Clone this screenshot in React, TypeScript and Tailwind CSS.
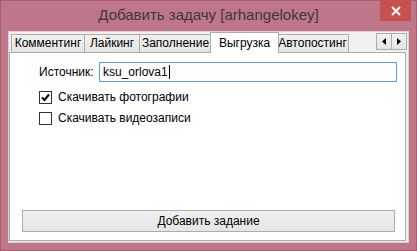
import React from "react";

const font = { fontFamily: '"Liberation Sans", Arial, sans-serif' };

function Tab({ label, w, selected }: { label: string; w: number; selected?: boolean }) {
  if (selected) {
    return (
      <div
        className="relative z-10 -mx-[2px] h-[21px] -mb-[1px] flex items-start justify-center border border-b-0 border-[#acacac] bg-white pt-[3px] text-[12px] leading-[14px] text-black"
        style={{ width: w + 4 }}
      >
        {label}
      </div>
    );
  }
  return (
    <div
      className="mt-[2px] h-[18px] -ml-[1px] first:ml-0 flex items-start justify-center border border-b-0 border-[#acacac] bg-gradient-to-b from-[#f0f0f0] to-[#e5e5e5] pt-[1px] text-[12px] leading-[14px] text-black"
      style={{ width: w }}
    >
      {label}
    </div>
  );
}

export default function App() {
  return (
    <div
      className="flex h-[251px] w-[417px] flex-col border border-[#a55d71] bg-[#bf7689]"
      style={font}
    >
      {/* Title bar */}
      <div className="relative flex h-[30px] shrink-0 items-center justify-center">
        <span className="pb-[2px] text-[15px] text-[#3a3a3a]">Добавить задачу [arhangelokey]</span>
        <div className="absolute right-[5px] top-[-1px] flex h-[21px] w-[31px] items-center justify-center bg-[#c75050]">
          <svg width="10" height="10" viewBox="0 0 10 10">
            <path d="M1 1 L9 9 M9 1 L1 9" stroke="white" strokeWidth="2" />
          </svg>
        </div>
      </div>

      {/* Client area */}
      <div className="mx-[7px] flex h-[212px] flex-col border border-[#d9cdd1] bg-[#f0f0f0]">
        {/* Tab strip */}
        <div className="flex h-[20px] shrink-0 items-start pl-[2px] pr-[1px]">
          <Tab label="Комментинг" w={74} />
          <Tab label="Лайкинг" w={56} />
          <Tab label="Заполнение" w={73} />
          <Tab label="Выгрузка" w={65} selected />
          <Tab label="Автопостинг" w={73} />
          <div className="flex-1" />
          <div className="mt-[1px] flex">
            <div className="flex h-[17px] w-[16px] items-center justify-center border border-[#acacac] bg-gradient-to-b from-[#f0f0f0] to-[#e5e5e5]">
              <svg width="4" height="7" viewBox="0 0 4 7">
                <path d="M4 0 L0 3.5 L4 7 Z" fill="black" />
              </svg>
            </div>
            <div className="-ml-[1px] flex h-[17px] w-[16px] items-center justify-center border border-[#acacac] bg-gradient-to-b from-[#f0f0f0] to-[#e5e5e5]">
              <svg width="4" height="7" viewBox="0 0 4 7">
                <path d="M0 0 L4 3.5 L0 7 Z" fill="black" />
              </svg>
            </div>
          </div>
        </div>

        {/* Tab page */}
        <div className="mb-[1px] mr-[2px] flex flex-1 flex-col border border-[#acacac] bg-white pl-[29px] pr-[8px] pt-[9px] text-[12px] leading-[16px] text-black">
          <div className="flex h-[20px] items-center">
            <span className="w-[60px]">Источник:</span>
            <div className="flex h-[20px] flex-1 items-center border border-[#569de5] pl-[3px]">
              <span>ksu_orlova1</span>
              <span className="ml-[1px] h-[14px] w-[1px] bg-black" />
            </div>
          </div>

          <div className="mt-[7px] flex h-[16px] items-center">
            <div className="flex h-[13px] w-[13px] items-center justify-center border border-[#333]">
              <svg width="11" height="11" viewBox="0 0 11 11">
                <path d="M2 5.5 L4.5 8 L9 2.5" stroke="black" strokeWidth="2" fill="none" />
              </svg>
            </div>
            <span className="ml-[6px]">Скачивать фотографии</span>
          </div>

          <div className="mt-[5px] flex h-[16px] items-center">
            <div className="h-[13px] w-[13px] border border-[#333] bg-white" />
            <span className="ml-[6px]">Скачивать видеозаписи</span>
          </div>

          <div className="flex-1" />

          <div className="mb-[8px] -ml-[17px] mr-[2px] flex h-[22px] items-center justify-center border border-[#acacac] bg-gradient-to-b from-[#f0f0f0] to-[#e5e5e5]">
            Добавить задание
          </div>
        </div>
      </div>
    </div>
  );
}
